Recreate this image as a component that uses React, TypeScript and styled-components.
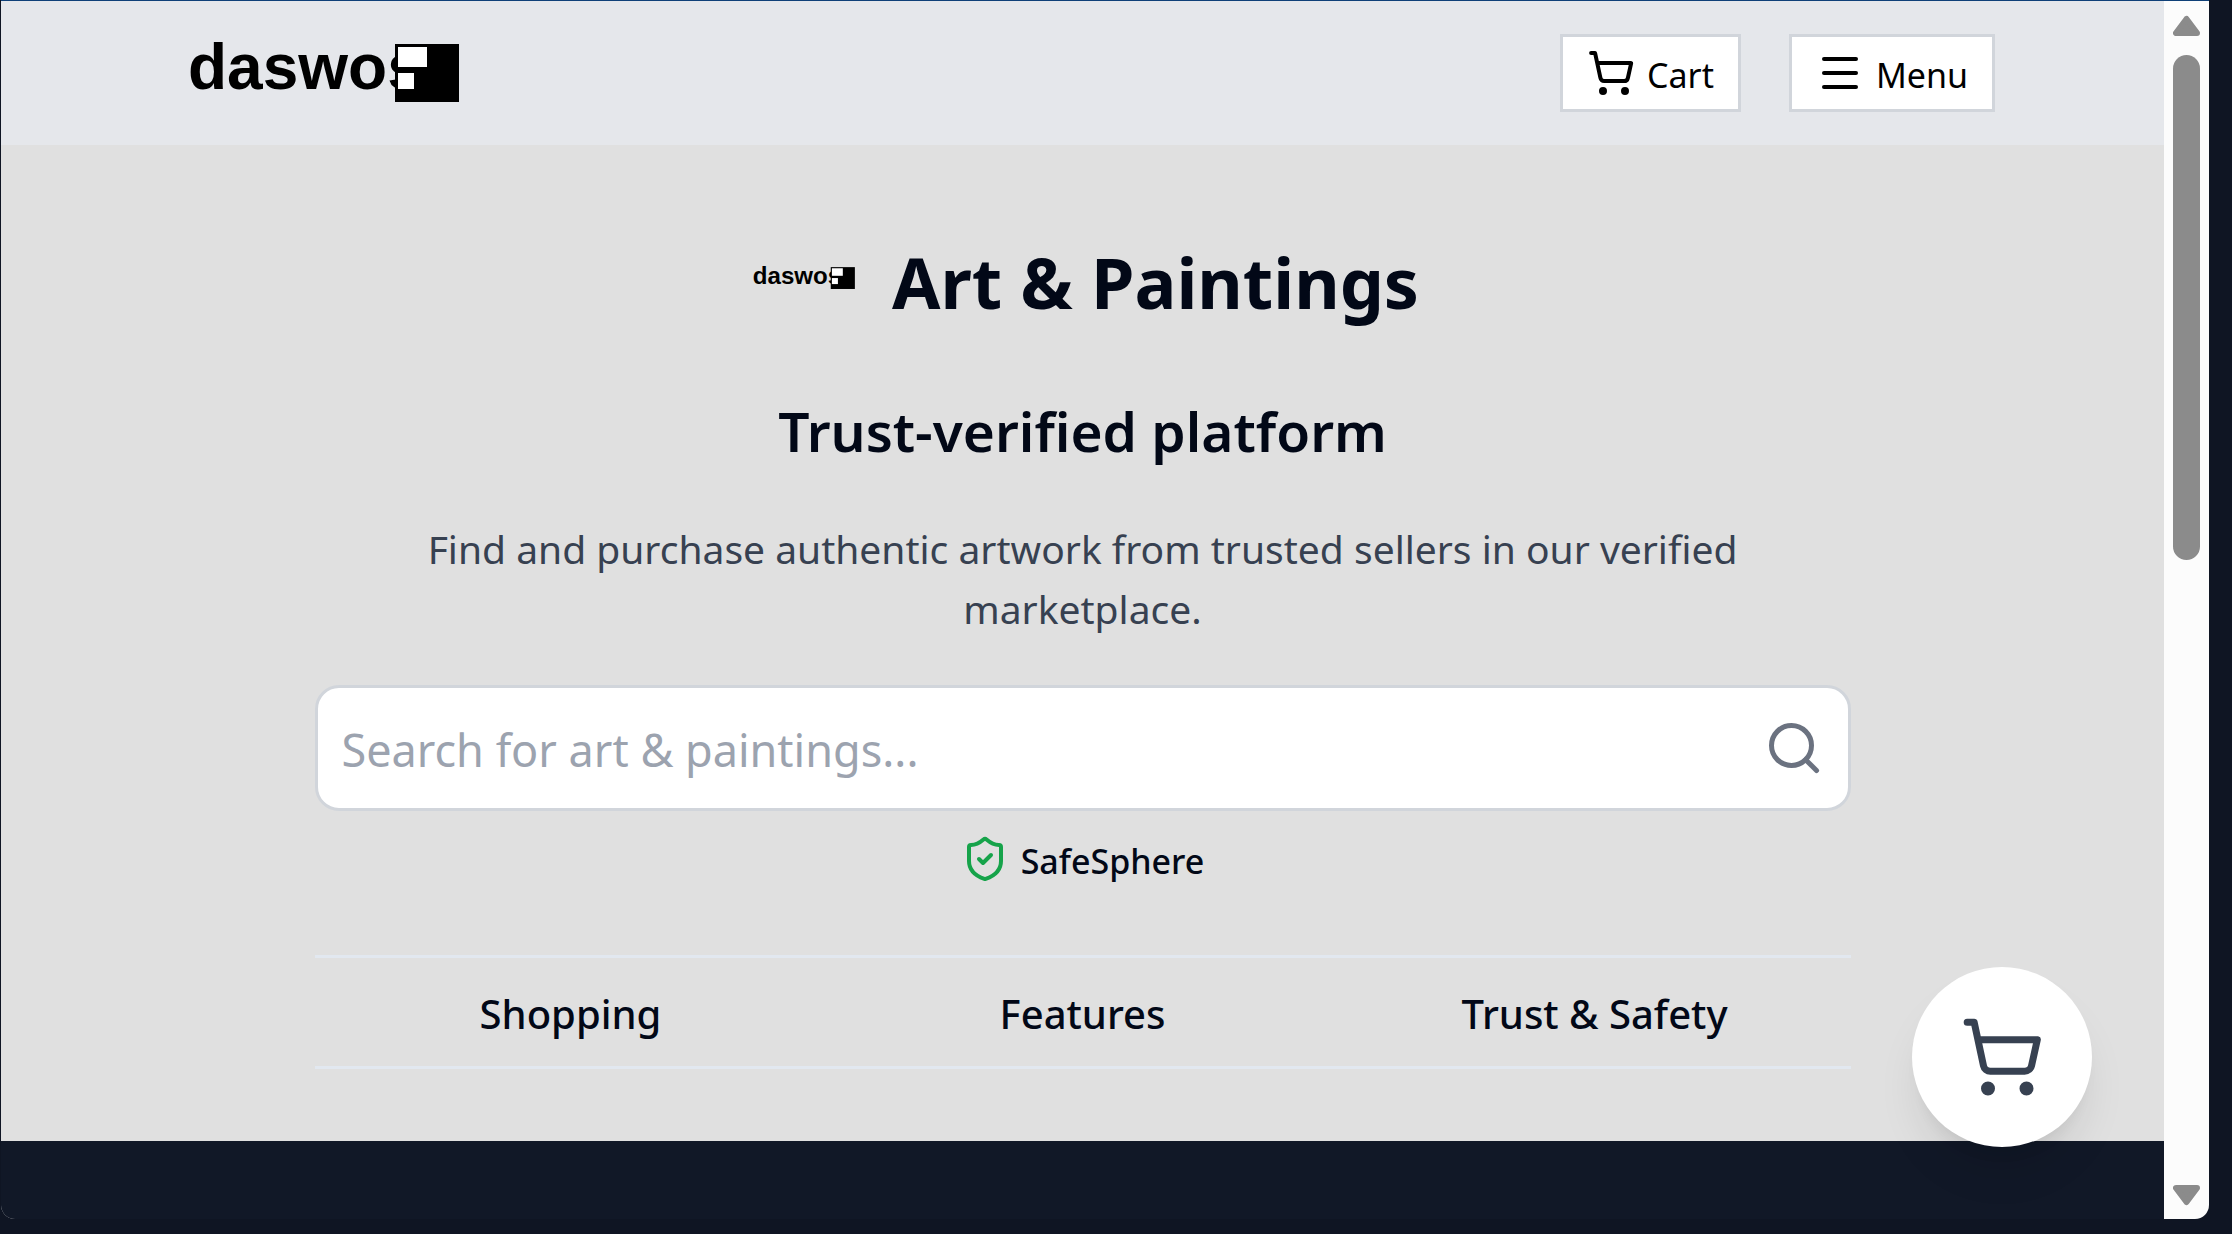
import React from "react";
import styled, { createGlobalStyle } from "styled-components";
import { Menu, Search, ShieldCheck, ShoppingCart } from "lucide-react";

const GlobalStyle = createGlobalStyle`
  *, *::before, *::after { box-sizing: border-box; }
  body {
    margin: 0;
    background: #0f1523;
    color: #020817;
    font-family: "Noto Sans", "Open Sans", sans-serif;
  }
  button, input { font: inherit; color: inherit; }
  h1, h2, p { margin: 0; }
`;

const Desktop = styled.div`
  display: flex;
  min-height: 100vh;
  padding: 0 23px 15px 1px;
`;

const Window = styled.div`
  position: relative;
  flex: 1;
  display: flex;
  border-top: 1px solid #0f4078;
  border-radius: 0 0 14px 14px;
  overflow: hidden;
`;

const Page = styled.div`
  flex: 1;
  display: flex;
  flex-direction: column;
  background: #e0e0e0;
`;

const Header = styled.header`
  display: flex;
  align-items: center;
  justify-content: space-between;
  height: 144px;
  padding: 0 169px;
  background: #e5e7eb;
`;

const HeaderActions = styled.div`
  display: flex;
  gap: 48px;
`;

const HeaderButton = styled.button`
  display: flex;
  align-items: center;
  gap: 12px;
  height: 78px;
  padding: 0 24px;
  border: 3px solid #d1d5db;
  background: #fff;
  color: #000;
  font-size: 34px;
  line-height: 48px;
`;

const IconLabel = styled.span`
  padding-top: 4px;
`;

const LogoSvg = styled.svg<{ $width: number }>`
  display: block;
  flex: none;
  width: ${(p) => p.$width}px;
  height: auto;
`;

const LogoText = styled.text`
  font-family: "Liberation Sans", Arial, sans-serif;
  font-size: 64px;
  font-weight: 700;
`;

const Hero = styled.main`
  display: flex;
  flex-direction: column;
  align-items: center;
  padding: 92px 24px 72px;
  text-align: center;
`;

const TitleRow = styled.div`
  display: flex;
  align-items: center;
  gap: 36px;
  margin-bottom: 62px;
`;

const TitleLogo = styled.div`
  padding-bottom: 8px;
`;

const Title = styled.h1`
  font-size: 70px;
  font-weight: 700;
  line-height: 90px;
`;

const Subtitle = styled.h2`
  margin-bottom: 46px;
  font-size: 55px;
  font-weight: 600;
  line-height: 84px;
`;

const Lead = styled.p`
  max-width: 1344px;
  margin-bottom: 46px;
  color: #374151;
  font-size: 39px;
  line-height: 60px;
`;

const SearchForm = styled.form`
  display: flex;
  align-items: center;
  width: 100%;
  max-width: 1536px;
  height: 126px;
  margin-bottom: 24px;
  padding: 0 24px;
  border: 3px solid #d1d5db;
  border-radius: 24px;
  background: #fff;
`;

const SearchInput = styled.input`
  flex: 1;
  min-width: 0;
  padding: 4px 0 0;
  border: 0;
  outline: 0;
  background: none;
  font-size: 45px;
  line-height: 72px;

  &::placeholder { color: #9ca3af; opacity: 1; }
`;

const SearchButton = styled.button`
  display: flex;
  padding: 0;
  border: 0;
  background: none;
  color: #6b7280;
`;

const Badge = styled.div`
  display: flex;
  align-items: center;
  gap: 12px;
  height: 48px;
  margin-bottom: 72px;
  font-size: 34px;
  font-weight: 500;
  line-height: 48px;

  svg { color: #16a34a; }
`;

const Sections = styled.nav`
  display: grid;
  grid-template-columns: repeat(3, 1fr);
  width: 100%;
  max-width: 1536px;
  border: solid #e2e8f0;
  border-width: 3px 0;
`;

const SectionLink = styled.a`
  padding: 26px 0 22px;
  color: inherit;
  font-size: 40px;
  font-weight: 500;
  line-height: 60px;
  text-decoration: none;
`;

const Footer = styled.footer`
  flex: 1;
  min-height: 78px;
  background: #111827;
`;

const FloatingCart = styled.button`
  position: absolute;
  right: 117px;
  bottom: 72px;
  display: flex;
  align-items: center;
  justify-content: center;
  width: 180px;
  height: 180px;
  padding: 0;
  border: 0;
  border-radius: 50%;
  background: #fff;
  color: #374151;
  box-shadow: 0 30px 45px -9px rgba(0, 0, 0, 0.1), 0 12px 18px -12px rgba(0, 0, 0, 0.1);
`;

const Scrollbar = styled.div`
  display: flex;
  flex-direction: column;
  align-items: center;
  width: 45px;
  padding: 12px 0;
  background: #fcfcfc;
`;

const ArrowButton = styled.button`
  display: flex;
  padding: 0;
  border: 0;
  background: none;
  color: #8b8b8b;
`;

const Track = styled.div`
  flex: 1;
  padding: 18px 0;
`;

const Thumb = styled.div`
  width: 27px;
  height: calc(100% * 5 / 11);
  border-radius: 14px;
  background: #8b8b8b;
`;

function Logo({ width }: { width: number }) {
  return (
    <LogoSvg $width={width} viewBox="0 0 292 64" role="img" aria-label="daswos">
      <LogoText x="18" y="48">daswos</LogoText>
      <rect x="225" y="3" width="64" height="58" fill="#000" />
      <rect x="228" y="6" width="29" height="20" fill="#fff" />
      <rect x="228" y="32" width="16" height="16" fill="#fff" />
    </LogoSvg>
  );
}

function Arrow({ down = false }: { down?: boolean }) {
  return (
    <svg width="27" height="24" viewBox="0 0 27 24" fill="currentColor" stroke="currentColor" strokeWidth="6" strokeLinejoin="round">
      <path d={down ? "M3 5H24L13.500 19Z" : "M3 20H24L13.500 6Z"} />
    </svg>
  );
}

const sections = ["Shopping", "Features", "Trust & Safety"];

export default function App() {
  return (
    <Desktop>
      <GlobalStyle />
      <Window>
        <Page>
          <Header>
            <Logo width={292} />
            <HeaderActions>
              <HeaderButton type="button">
                <ShoppingCart size={48} />
                <IconLabel>Cart</IconLabel>
              </HeaderButton>
              <HeaderButton type="button">
                <Menu size={48} />
                <IconLabel>Menu</IconLabel>
              </HeaderButton>
            </HeaderActions>
          </Header>
          <Hero>
            <TitleRow>
              <TitleLogo>
                <Logo width={110} />
              </TitleLogo>
              <Title>Art &amp; Paintings</Title>
            </TitleRow>
            <Subtitle>Trust-verified platform</Subtitle>
            <Lead>
              Find and purchase authentic artwork from trusted sellers in our verified marketplace.
            </Lead>
            <SearchForm role="search" onSubmit={(e) => e.preventDefault()}>
              <SearchInput
                type="text"
                aria-label="Search for art & paintings"
                placeholder="Search for art & paintings..."
              />
              <SearchButton type="submit" aria-label="Search">
                <Search size={60} />
              </SearchButton>
            </SearchForm>
            <Badge>
              <ShieldCheck size={48} />
              <IconLabel>SafeSphere</IconLabel>
            </Badge>
            <Sections>
              {sections.map((name) => (
                <SectionLink key={name} href="#">
                  {name}
                </SectionLink>
              ))}
            </Sections>
          </Hero>
          <Footer />
        </Page>
        <Scrollbar>
          <ArrowButton type="button" aria-label="Scroll up">
            <Arrow />
          </ArrowButton>
          <Track>
            <Thumb />
          </Track>
          <ArrowButton type="button" aria-label="Scroll down">
            <Arrow down />
          </ArrowButton>
        </Scrollbar>
        <FloatingCart type="button" aria-label="Open cart">
          <ShoppingCart size={84} />
        </FloatingCart>
      </Window>
    </Desktop>
  );
}
